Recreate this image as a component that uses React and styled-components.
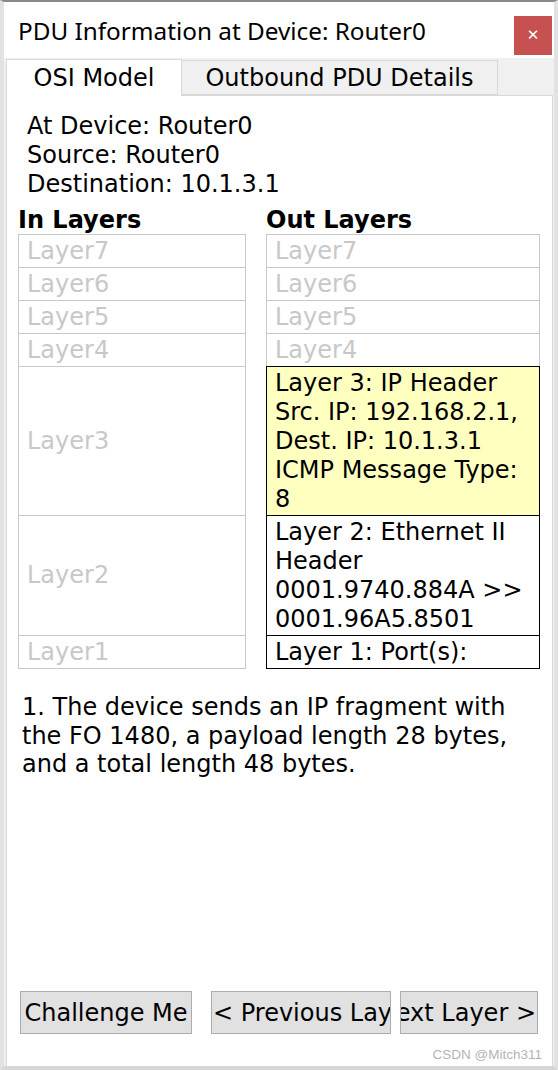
import React from 'react';
import styled, { createGlobalStyle } from 'styled-components';

const GlobalStyle = createGlobalStyle`
  html, body {
    margin: 0;
    padding: 0;
    background: #ffffff;
  }
  * {
    box-sizing: border-box;
  }
`;

const Window = styled.div`
  width: 558px;
  height: 1070px;
  display: flex;
  flex-direction: column;
  background: #f0f0f0;
  border-top: 2px solid #8a8a8a;
  border-left: 4px solid #e2e2e2;
  border-right: 4px solid #e2e2e2;
  border-bottom: 4px solid #d6d6d6;
  font-family: "DejaVu Sans", Verdana, sans-serif;
  color: #000;
  overflow: hidden;
`;

const TitleBar = styled.div`
  height: 56px;
  display: flex;
  align-items: center;
  justify-content: space-between;
  background: #ffffff;
  padding: 0 2px 0 14px;
`;

const Title = styled.div`
  font-family: "Noto Sans", "Open Sans", sans-serif;
  font-size: 24.3px;
  color: #000;
`;

const CloseButton = styled.div`
  width: 38px;
  height: 39px;
  margin-top: 10px;
  background: #c75050;
  color: #ffffff;
  display: flex;
  align-items: center;
  justify-content: center;
  font-family: "DejaVu Sans", sans-serif;
  font-weight: bold;
  font-size: 15px;
`;

const TabStrip = styled.div`
  display: flex;
  align-items: flex-end;
  height: 37px;
  padding-left: 2px;
`;

const Tab = styled.div`
  height: ${p => (p.active ? '37px' : '35px')};
  width: ${p => p.w}px;
  display: flex;
  align-items: center;
  justify-content: center;
  white-space: nowrap;
  font-size: 24px;
  background: ${p => (p.active ? '#ffffff' : '#f0f0f0')};
  border: 1px solid #d9d9d9;
  border-bottom: ${p => (p.active ? 'none' : '1px solid #d9d9d9')};
  border-left: ${p => (p.active ? '1px solid #d9d9d9' : 'none')};
  position: relative;
  z-index: ${p => (p.active ? 1 : 0)};
  margin-bottom: ${p => (p.active ? '-1px' : '0')};
`;

const Panel = styled.div`
  flex: 1;
  margin: 0 1px 0 2px;
  background: #ffffff;
  border: 1px solid #d9d9d9;
  border-bottom: none;
  display: flex;
  flex-direction: column;
  padding: 16px 4px 0 11px;
`;

const Info = styled.div`
  padding-left: 9px;
  font-size: 24px;
  line-height: 29px;
`;

const Columns = styled.div`
  display: grid;
  grid-template-columns: 228px 274px;
  column-gap: 20px;
  margin-top: 7px;
`;

const Column = styled.div`
  display: flex;
  flex-direction: column;
`;

const ColumnHeading = styled.div`
  font-weight: bold;
  font-size: 24px;
  line-height: 28px;
`;

const LayerBox = styled.div`
  height: ${p => p.h}px;
  border: 1px solid ${p => (p.active ? '#000000' : '#c8c8c8')};
  background: ${p => p.bg || '#ffffff'};
  color: ${p => (p.active ? '#000000' : '#c8c8c8')};
  font-size: 24px;
  line-height: 29px;
  padding: ${p => (p.active ? '2px 8px 0 8px' : '0 8px')};
  display: flex;
  flex-direction: column;
  justify-content: ${p => (p.active ? 'flex-start' : 'center')};
  white-space: pre-line;
  overflow: hidden;
  & + & {
    margin-top: -1px;
  }
`;

const Description = styled.div`
  margin-top: 24px;
  padding-left: 4px;
  font-size: 24px;
  line-height: 28.5px;
  width: 515px;
`;

const Spacer = styled.div`
  flex: 1;
`;

const ButtonRow = styled.div`
  display: flex;
  align-items: center;
  padding-left: 2px;
`;

const Button = styled.div`
  width: ${p => p.w}px;
  height: 43px;
  margin-left: ${p => p.gap || 0}px;
  background: #e1e1e1;
  border: 1px solid #adadad;
  font-size: 24px;
  display: flex;
  align-items: center;
  justify-content: ${p => p.align || 'center'};
  padding: 0 1px;
  white-space: nowrap;
  overflow: hidden;
`;

const Footer = styled.div`
  height: 32px;
  display: flex;
  justify-content: flex-end;
  align-items: flex-end;
  padding: 0 6px 4px 0;
  font-family: "Liberation Sans", Arial, sans-serif;
  font-size: 13.5px;
  color: #b4b4b4;
`;

const inLayers = [
  { name: 'Layer7', h: 34 },
  { name: 'Layer6', h: 34 },
  { name: 'Layer5', h: 34 },
  { name: 'Layer4', h: 34 },
  { name: 'Layer3', h: 150 },
  { name: 'Layer2', h: 121 },
  { name: 'Layer1', h: 34 },
];

const outLayers = [
  { name: 'Layer7', h: 34 },
  { name: 'Layer6', h: 34 },
  { name: 'Layer5', h: 34 },
  { name: 'Layer4', h: 34 },
  {
    name: 'Layer 3: IP Header\nSrc. IP: 192.168.2.1,\nDest. IP: 10.1.3.1\nICMP Message Type:\n8',
    h: 150,
    active: true,
    bg: '#ffffc0',
  },
  {
    name: 'Layer 2: Ethernet II\nHeader\n0001.9740.884A >>\n0001.96A5.8501',
    h: 121,
    active: true,
  },
  { name: 'Layer 1: Port(s):', h: 34, active: true },
];

export default function App() {
  return (
    <>
      <GlobalStyle />
      <Window>
        <TitleBar>
          <Title>PDU Information at Device: Router0</Title>
          <CloseButton>✕</CloseButton>
        </TitleBar>
        <TabStrip>
          <Tab active w={176}>OSI Model</Tab>
          <Tab w={316}>Outbound PDU Details</Tab>
        </TabStrip>
        <Panel>
          <Info>
            <div>At Device: Router0</div>
            <div>Source: Router0</div>
            <div>Destination: 10.1.3.1</div>
          </Info>
          <Columns>
            <Column>
              <ColumnHeading>In Layers</ColumnHeading>
              {inLayers.map(l => (
                <LayerBox key={l.name} h={l.h}>{l.name}</LayerBox>
              ))}
            </Column>
            <Column>
              <ColumnHeading>Out Layers</ColumnHeading>
              {outLayers.map(l => (
                <LayerBox key={l.name} h={l.h} active={l.active} bg={l.bg}>
                  {l.name}
                </LayerBox>
              ))}
            </Column>
          </Columns>
          <Description>
            1. The device sends an IP fragment with the FO 1480, a payload length 28 bytes, and a total length 48 bytes.
          </Description>
          <Spacer />
          <ButtonRow>
            <Button w={172}>Challenge Me</Button>
            <Button w={180} gap={19} align="flex-start">&lt; Previous Layer</Button>
            <Button w={138} gap={9} align="flex-end">Next Layer &gt;</Button>
          </ButtonRow>
          <Footer>CSDN @Mitch311</Footer>
        </Panel>
      </Window>
    </>
  );
}
